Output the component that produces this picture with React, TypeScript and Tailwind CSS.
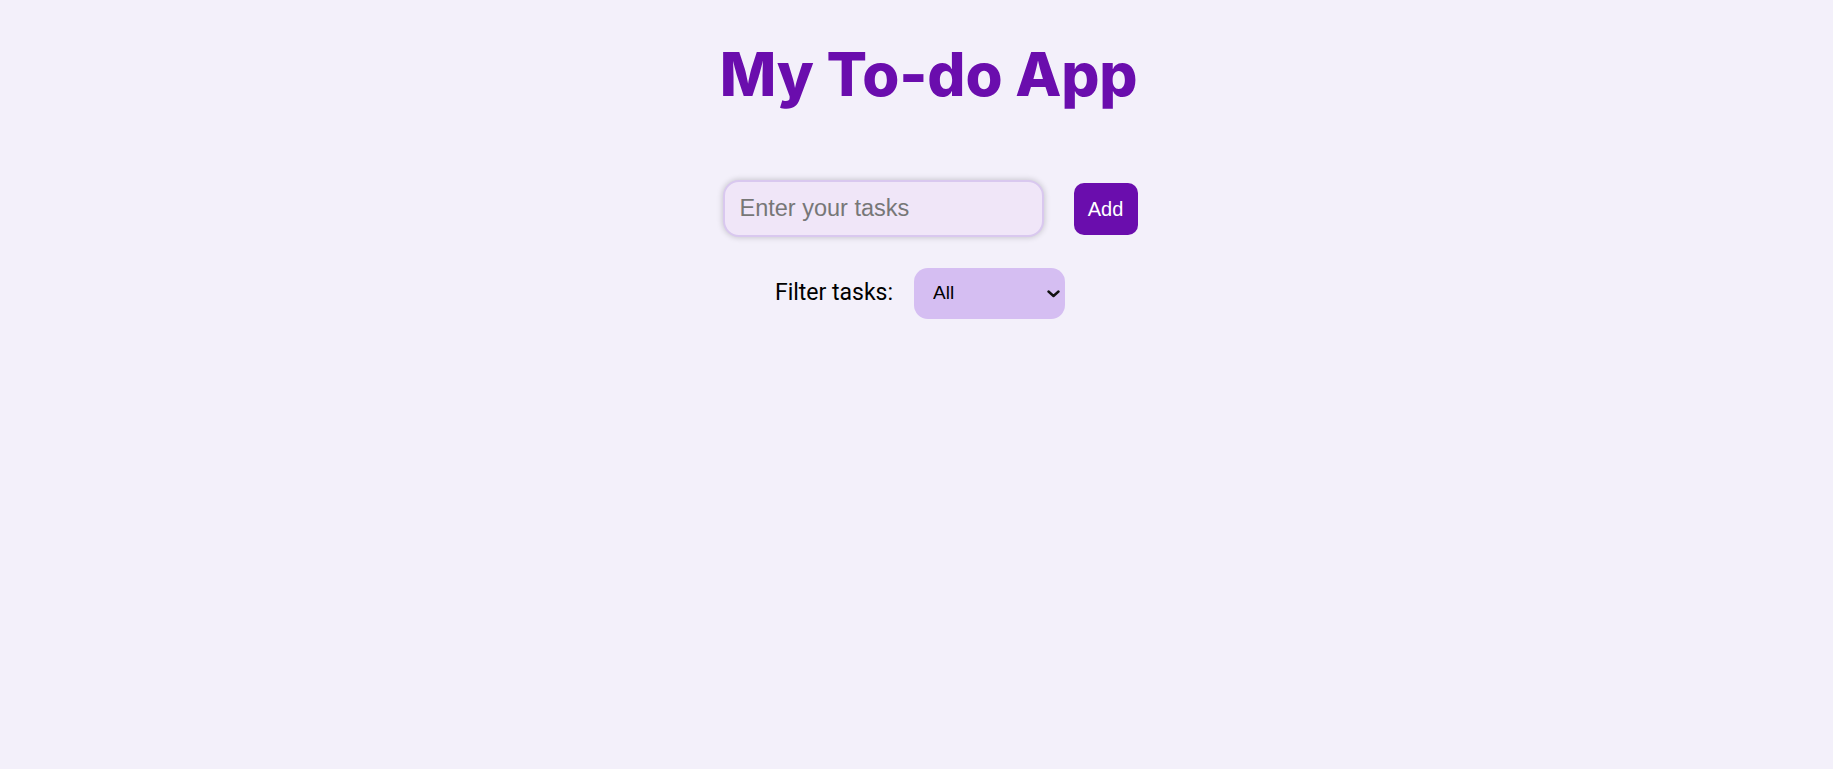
import React from "react";

export default function App() {
  return (
    <div className="min-h-[769px] w-full bg-[#f3f0fa] flex flex-col items-center font-['Roboto',sans-serif]">
      <h1 className="mt-[38px] pl-[24px] text-[60px] leading-[72px] font-extrabold text-[#6a0dad] tracking-[-0.2px] font-['Inter',sans-serif]">
        My To-do App
      </h1>
      <div className="mt-[70px] pl-[27px] flex items-center gap-[30px] font-['Liberation_Sans',Arial,sans-serif]">
        <input
          placeholder="Enter your tasks"
          className="w-[321px] h-[57px] rounded-[16px] border-2 border-[#d9c8ef] bg-[#f0e6f8] px-[15px] text-[23.5px] text-black placeholder:text-[#777] shadow-[0_0_6px_rgba(0,0,0,0.22)] outline-none"
        />
        <button className="w-[64px] h-[52px] rounded-[10px] bg-[#6a0dad] text-white text-[20px]">
          Add
        </button>
      </div>
      <div className="mt-[31px] pl-[7px] flex items-center gap-[21px]">
        <label className="text-[23px] text-black">Filter tasks:</label>
        <div className="relative">
          <select
            className="appearance-none w-[151px] h-[51px] rounded-[14px] bg-[#d5bef2] pl-[19px] pr-[24px] text-[19px] text-black border-0 outline-none font-['Liberation_Sans',Arial,sans-serif]"
            defaultValue="All"
          >
            <option>All</option>
            <option>Completed</option>
            <option>Pending</option>
          </select>
          <svg
            className="pointer-events-none absolute right-[5px] top-[22px]"
            width="13"
            height="8"
            viewBox="0 0 13 8"
            fill="none"
          >
            <path d="M1.5 1.5 L6.5 6 L11.5 1.5" stroke="#111" strokeWidth="2.4" strokeLinecap="round" strokeLinejoin="round" />
          </svg>
        </div>
      </div>
    </div>
  );
}
